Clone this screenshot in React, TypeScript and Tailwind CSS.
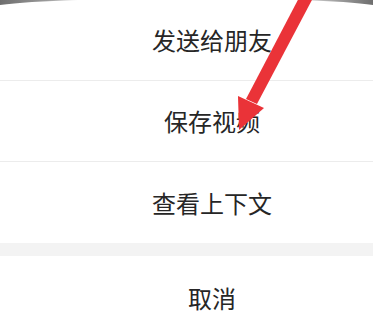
const items = ["发送给朋友", "保存视频", "查看上下文"];

function Row({ label, last }: { label: string; last?: boolean }) {
  return (
    <div
      className={`flex h-[81px] items-center justify-center bg-white pl-[51px] text-[24px] text-[#262626] ${
        last ? "" : "border-b border-[#ececec]"
      }`}
    >
      {label}
    </div>
  );
}

export default function App() {
  return (
    <div
      className="relative h-[336px] w-[373px] overflow-hidden bg-white"
      style={{ fontFamily: '"Noto Sans CJK SC", "Noto Sans", sans-serif' }}
    >
      {items.map((label, i) => (
        <Row key={label} label={label} last={i === items.length - 1} />
      ))}
      <div className="h-[13px] bg-[#f3f3f3]" />
      <div className="flex h-[85px] items-center justify-center border-b border-[#ececec] bg-white pl-[51px] text-[24px] text-[#262626]">
        取消
      </div>

      <svg
        className="pointer-events-none absolute left-0 top-0"
        width="373"
        height="336"
        viewBox="0 0 373 336"
      >
        <defs>
          <linearGradient id="shadeL" x1="0" x2="1" y1="0" y2="0">
            <stop offset="0" stopColor="#6e6e6e" />
            <stop offset="0.6" stopColor="#9a9a9a" />
            <stop offset="1" stopColor="#e6e6e6" />
          </linearGradient>
          <linearGradient id="shadeR" x1="0" x2="1" y1="0" y2="0">
            <stop offset="0" stopColor="#e6e6e6" />
            <stop offset="0.5" stopColor="#a0a0a0" />
            <stop offset="1" stopColor="#6e6e6e" />
          </linearGradient>
        </defs>
        <path d="M0,0 H78 Q25,1.5 0,5 Z" fill="url(#shadeL)" />
        <path d="M373,0 H300 Q350,1.5 373,5 Z" fill="url(#shadeR)" />
        <polygon points="301,-6 313,-2 257,104 246,99" fill="#ea3338" />
        <polygon points="238,96 264,108 239,130" fill="#ea3338" />
      </svg>
    </div>
  );
}
